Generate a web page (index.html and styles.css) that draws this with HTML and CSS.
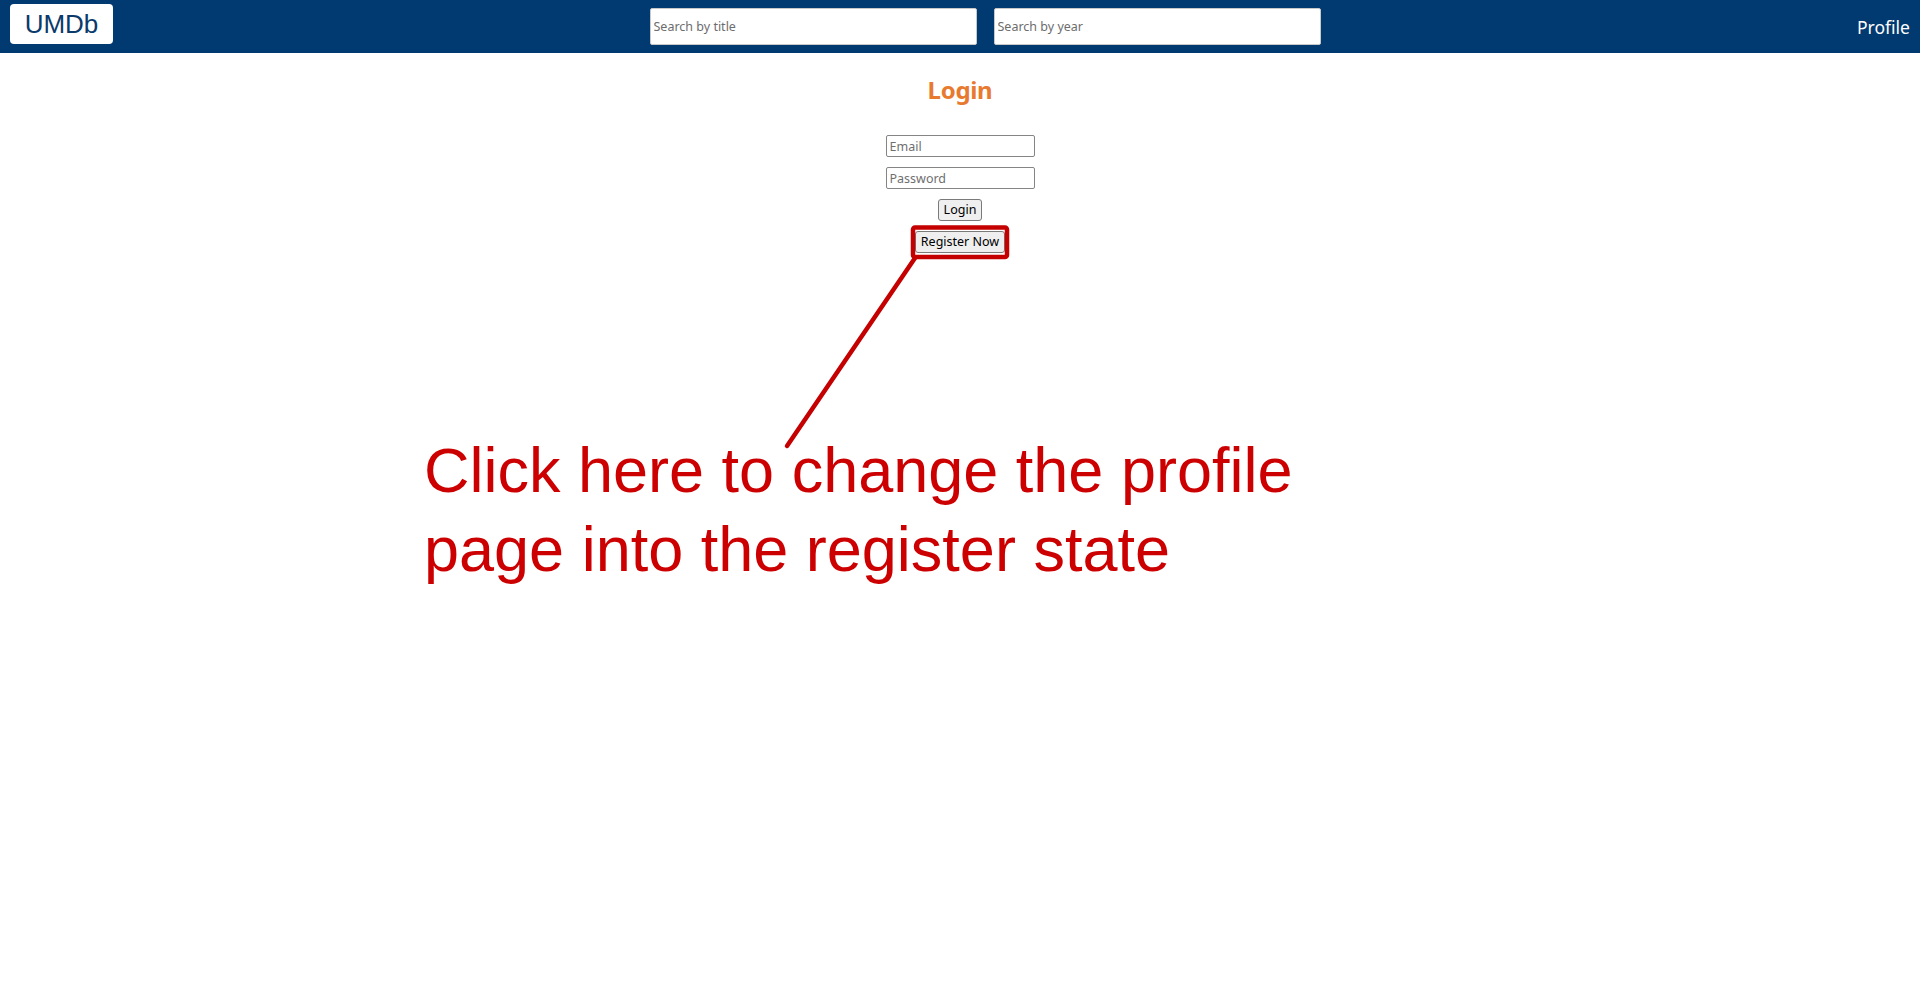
FILE: index.html
```html
<!DOCTYPE html>
<html lang="en">
<head>
<meta charset="utf-8">
<title>UMDb - Login</title>
<link rel="stylesheet" href="styles.css">
</head>
<body>
<header class="topbar">
  <a class="logo" href="#">UMDb</a>
  <div class="search-group">
    <input class="search-input" type="text" placeholder="Search by title">
    <input class="search-input" type="text" placeholder="Search by year">
  </div>
  <a class="profile-link" href="#">Profile</a>
</header>
<main class="page">
  <h1 class="page-title">Login</h1>
  <form class="login-form">
    <input class="field" type="email" placeholder="Email">
    <input class="field" type="password" placeholder="Password">
    <button class="btn" type="button">Login</button>
    <button class="btn" type="button">Register Now</button>
  </form>
</main>
<svg class="annotation-lines" width="1920" height="995" viewBox="0 0 1920 995" aria-hidden="true">
  <rect x="913" y="227.5" width="94" height="29.5" rx="2" ry="2" fill="none" stroke="#c40000" stroke-width="4.5"/>
  <line x1="915" y1="258" x2="787" y2="446" stroke="#c40000" stroke-width="4.5" stroke-linecap="round"/>
</svg>
<div class="annotation-text">Click here to change the profile<br>page into the register state</div>
</body>
</html>
```
FILE: styles.css
```css
* { box-sizing: border-box; }
html, body { margin: 0; padding: 0; }
body {
  background: #ffffff;
  font-family: "Noto Sans", "Open Sans", sans-serif;
  width: 1920px;
  height: 995px;
  position: relative;
  overflow: hidden;
}
.topbar {
  display: flex;
  justify-content: space-between;
  align-items: flex-start;
  height: 53px;
  padding: 0 10px;
  background: #013a71;
}
.logo {
  margin-top: 4px;
  width: 103px;
  height: 40px;
  display: flex;
  align-items: center;
  justify-content: center;
  background: #ffffff;
  border-radius: 4px;
  color: #0b3a6b;
  font-family: "Liberation Sans", Arial, sans-serif;
  font-size: 26px;
  text-decoration: none;
}
.search-group {
  display: flex;
  gap: 17px;
  margin-top: 8px;
}
.search-input {
  width: 327px;
  height: 37px;
  border: 1px solid #c8c8c8;
  border-radius: 2px;
  padding: 0 3px;
  font-family: "Noto Sans", sans-serif;
  font-size: 12.5px;
  color: #333;
  background: #fff;
}
.search-input::placeholder { color: #6d6d6d; }
.profile-link {
  color: #ffffff;
  font-size: 17.5px;
  line-height: 24px;
  padding-top: 15px;
  text-decoration: none;
}
.page {
  display: flex;
  flex-direction: column;
  align-items: center;
}
.page-title {
  margin: 21px 0 0;
  font-size: 24px;
  line-height: 31px;
  font-weight: 700;
  color: #e87a30;
  letter-spacing: -0.3px;
}
.login-form {
  margin-top: 30px;
  display: flex;
  flex-direction: column;
  align-items: center;
  gap: 10px;
}
.field {
  width: 149px;
  height: 22px;
  border: 1px solid #858585;
  border-radius: 2px;
  padding: 0 3px;
  font-family: "Noto Sans", sans-serif;
  font-size: 12.5px;
  color: #222;
}
.field::placeholder { color: #6f6f6f; }
.btn {
  height: 22px;
  padding: 0 5px;
  border: 1px solid #7a7a7a;
  border-radius: 3px;
  background: #efefef;
  font-family: "Noto Sans", sans-serif;
  font-size: 12.5px;
  color: #000;
  line-height: 18px;
}
.annotation-lines {
  position: absolute;
  left: 0;
  top: 0;
  pointer-events: none;
}
.annotation-text {
  position: absolute;
  left: 424px;
  top: 431px;
  color: #cc0000;
  font-family: "Liberation Sans", Arial, sans-serif;
  font-size: 63px;
  line-height: 79px;
  white-space: nowrap;
}
```
